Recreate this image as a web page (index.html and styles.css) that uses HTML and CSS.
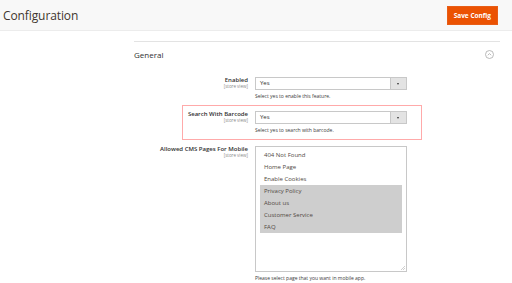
FILE: index.html
```html
<!DOCTYPE html>
<html>
<head>
    <link rel="stylesheet" href="styles.css">
</head>
<body>
    <header class="page-header">
        <h1 class="page-title">Configuration</h1>
        <button class="save-button">Save Config</button>
    </header>

    <div class="content">
        <section class="config-section">
            <div class="section-head">
                <span class="section-title">General</span>
                <svg class="collapse-icon" width="9" height="9" viewBox="0 0 9 9">
                    <circle cx="4.5" cy="4.5" r="4" fill="none" stroke="#a8a8a8" stroke-width="0.8"/>
                    <path d="M2.8 5.2 L4.5 3.6 L6.2 5.2" fill="none" stroke="#a8a8a8" stroke-width="0.8"/>
                </svg>
            </div>

            <div class="field-row row-enabled">
                <div class="field-label">
                    <span class="label-text">Enabled</span>
                    <span class="scope">[store view]</span>
                </div>
                <div class="field-control">
                    <div class="select">
                        <span class="select-value">Yes</span>
                        <span class="select-arrow"></span>
                    </div>
                    <div class="hint">Select yes to enable this feature.</div>
                </div>
            </div>

            <div class="field-row row-barcode highlighted">
                <div class="field-label">
                    <span class="label-text">Search With Barcode</span>
                    <span class="scope">[store view]</span>
                </div>
                <div class="field-control">
                    <div class="select">
                        <span class="select-value">Yes</span>
                        <span class="select-arrow"></span>
                    </div>
                    <div class="hint">Select yes to search with barcode.</div>
                </div>
            </div>

            <div class="field-row row-pages">
                <div class="field-label">
                    <span class="label-text">Allowed CMS Pages For Mobile</span>
                    <span class="scope">[store view]</span>
                </div>
                <div class="field-control">
                    <div class="multiselect">
                        <div class="option">404 Not Found</div>
                        <div class="option">Home Page</div>
                        <div class="option">Enable Cookies</div>
                        <div class="option selected">Privacy Policy</div>
                        <div class="option selected">About us</div>
                        <div class="option selected">Customer Service</div>
                        <div class="option selected">FAQ</div>
                        <svg class="resize-grip" width="5" height="5" viewBox="0 0 5 5">
                            <path d="M1 5 L5 1 M3 5 L5 3" stroke="#b0b0b0" stroke-width="0.6"/>
                        </svg>
                    </div>
                    <div class="hint">Please select page that you want in mobile app.</div>
                </div>
            </div>
        </section>
    </div>
</body>
</html>
```

FILE: styles.css
```css
body {
    margin: 0;
    font-family: "Open Sans", "DejaVu Sans", sans-serif;
    background: #ffffff;
    color: #303030;
}
.page-header {
    display: flex;
    justify-content: space-between;
    align-items: center;
    height: 30px;
    padding: 0 14px 0 3px;
    background: #f8f8f8;
    border-bottom: 1px solid #ececec;
}
.page-title {
    margin: 0;
    font-size: 12px;
    font-weight: 400;
    color: #41362f;
    letter-spacing: -0.1px;
}
.save-button {
    height: 19px;
    padding: 0 6px;
    border: 1px solid #e85d16;
    background: #eb5202;
    color: #ffffff;
    font-family: "Open Sans", sans-serif;
    font-size: 6.5px;
    font-weight: 700;
    cursor: pointer;
}
.content {
    padding: 10px 12px 0 134px;
}
.config-section {
    border-top: 1px solid #e3e3e3;
}
.section-head {
    display: flex;
    justify-content: space-between;
    align-items: center;
    height: 24px;
    margin-bottom: 11px;
}
.section-title {
    font-size: 8px;
    color: #303030;
}
.collapse-icon {
    margin-right: 6px;
}
.field-row {
    display: grid;
    grid-template-columns: 114px 152px;
    column-gap: 7px;
}
.row-enabled { margin-bottom: 11px; }
.row-barcode { margin-bottom: 12px; }
.highlighted {
    position: relative;
}
.highlighted::before {
    content: "";
    position: absolute;
    left: 48px;
    top: -6px;
    width: 240px;
    height: 35px;
    box-sizing: border-box;
    border: 1.5px solid #ffaaaa;
    pointer-events: none;
}
.field-label {
    display: flex;
    flex-direction: column;
    align-items: flex-end;
    text-align: right;
}
.label-text {
    font-size: 6px;
    font-weight: 600;
    line-height: 7px;
    color: #303030;
}
.scope {
    font-size: 4.5px;
    line-height: 5px;
    color: #8a8a8a;
}
.select {
    display: flex;
    height: 13px;
    box-sizing: border-box;
    border: 1px solid #c8c8c8;
    background: #ffffff;
}
.select-value {
    flex: 1;
    padding-left: 4px;
    font-size: 6px;
    line-height: 11px;
    color: #303030;
}
.select-arrow {
    position: relative;
    width: 15px;
    background: #e3e3e3;
    border-left: 1px solid #c8c8c8;
}
.select-arrow::after {
    content: "";
    position: absolute;
    left: 6px;
    top: 4.5px;
    border-left: 1.5px solid transparent;
    border-right: 1.5px solid transparent;
    border-top: 2px solid #333333;
}
.hint {
    margin-top: 3px;
    font-size: 5px;
    line-height: 7px;
    color: #3a3a3a;
}
.multiselect {
    position: relative;
    height: 126px;
    box-sizing: border-box;
    border: 1px solid #c8c8c8;
    padding: 2px 4px;
}
.option {
    height: 12px;
    line-height: 12px;
    padding-left: 4px;
    font-size: 6px;
    color: #514943;
}
.option.selected {
    background: #cecece;
}
.resize-grip {
    position: absolute;
    right: 1px;
    bottom: 1px;
}
```
